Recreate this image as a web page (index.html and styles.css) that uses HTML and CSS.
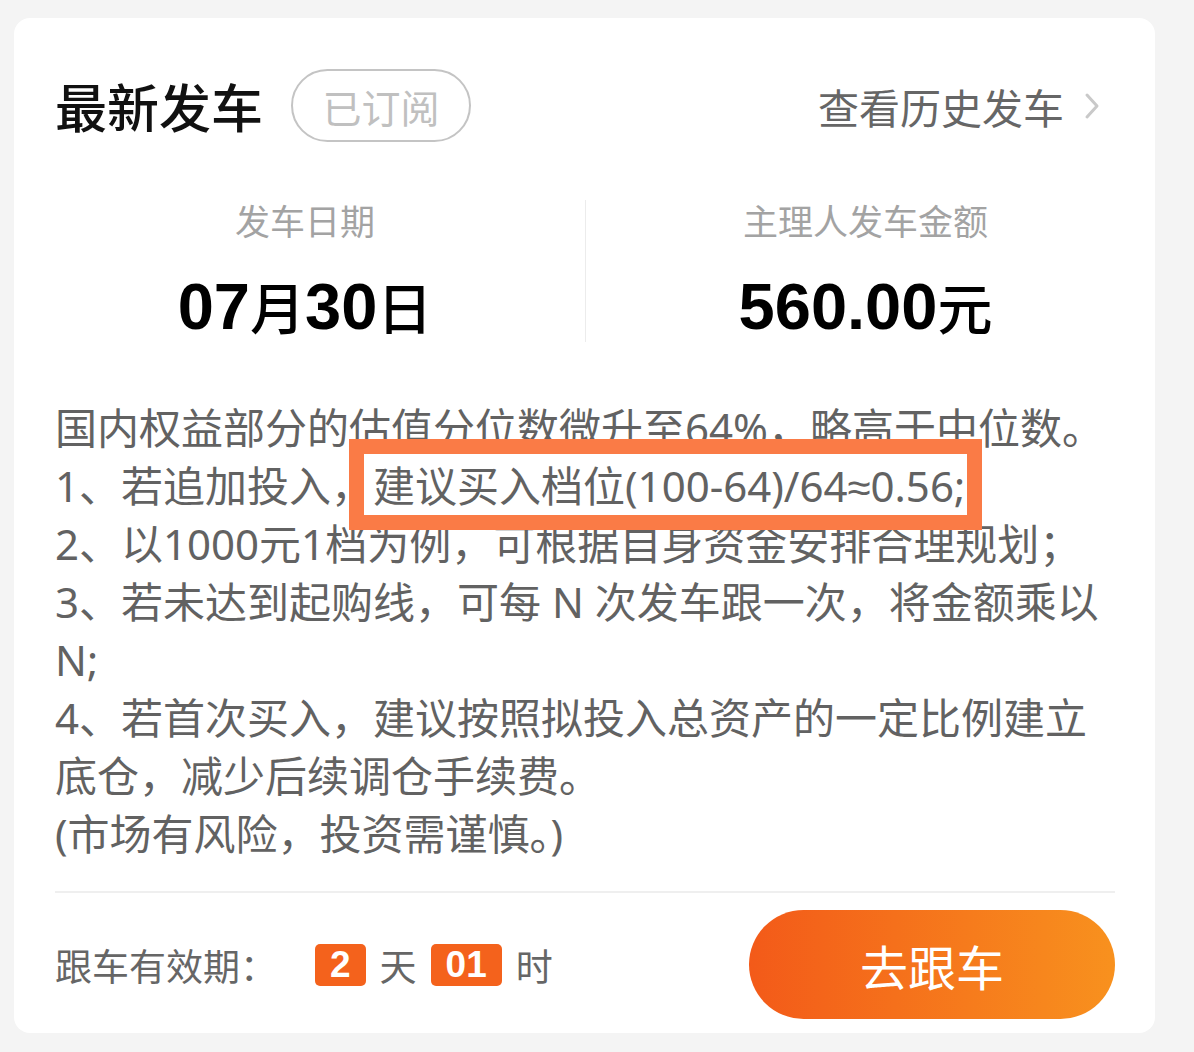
FILE: index.html
```html
<!DOCTYPE html>
<html lang="zh-CN">
<head>
    <meta charset="UTF-8">
    <meta name="viewport" content="width=device-width, initial-scale=1.0">
    <title>最新发车</title>
    <link rel="stylesheet" href="styles.css">
</head>
<body>
    <div class="card">
        <div class="card-header">
            <div class="header-left">
                <h1 class="title">最新发车</h1>
                <span class="sub-pill">已订阅</span>
            </div>
            <a class="history-link" href="#">
                查看历史发车
                <svg class="chevron" width="16" height="28" viewBox="0 0 16 28">
                    <path d="M3 3 L13 14 L3 25" fill="none" stroke="#c9c9c9" stroke-width="3" stroke-linecap="round" stroke-linejoin="round"/>
                </svg>
            </a>
        </div>

        <div class="stats">
            <div class="stat">
                <div class="stat-label">发车日期</div>
                <div class="stat-value">07<span class="unit">月</span>30<span class="unit">日</span></div>
            </div>
            <div class="stat stat-right">
                <div class="stat-label">主理人发车金额</div>
                <div class="stat-value">560.00<span class="unit">元</span></div>
            </div>
        </div>

        <div class="note">
            <p>国内权益部分的估值分位数微升至64%，略高于中位数。</p>
            <p>1、若追加投入，建议买入档位(100-64)/64≈0.56;</p>
            <p>2、以1000元1档为例，可根据自身资金安排合理规划；</p>
            <p>3、若未达到起购线，可每 N 次发车跟一次，将金额乘以 N;</p>
            <p>4、若首次买入，建议按照拟投入总资产的一定比例建立底仓，减少后续调仓手续费。</p>
            <p>(市场有风险，投资需谨慎。)</p>
            <div class="highlight-box"></div>
        </div>

        <div class="card-footer">
            <div class="expire">
                <span class="expire-label">跟车有效期：</span>
                <span class="count">2</span>
                <span class="count-unit">天</span>
                <span class="count">01</span>
                <span class="count-unit">时</span>
            </div>
            <button class="follow-btn">去跟车</button>
        </div>
    </div>
</body>
</html>
```

FILE: styles.css
```css
body {
    margin: 0;
    background-color: #f4f4f4;
    font-family: "Noto Sans CJK SC", "Noto Sans", sans-serif;
}
.card {
    width: 1141px;
    height: 1015px;
    margin: 18px 0 0 14px;
    padding: 51px 40px 0 41px;
    box-sizing: border-box;
    background-color: white;
    border-radius: 16px;
}
.card-header {
    display: flex;
    justify-content: space-between;
    align-items: center;
    height: 73px;
}
.header-left {
    display: flex;
    align-items: center;
    gap: 28px;
}
.title {
    margin: 0;
    font-size: 52px;
    font-weight: 500;
    color: #111;
    line-height: 73px;
}
.sub-pill {
    display: flex;
    align-items: center;
    justify-content: center;
    width: 180px;
    height: 73px;
    box-sizing: border-box;
    border: 2px solid #c4c4c4;
    border-radius: 37px;
    font-size: 39px;
    color: #c0c0c0;
}
.history-link {
    display: flex;
    align-items: center;
    gap: 20px;
    padding-right: 15px;
    font-size: 41px;
    color: #666;
    text-decoration: none;
}

.stats {
    display: grid;
    grid-template-columns: 1fr 1fr;
    margin: 58px -30px 0;
}
.stat {
    display: flex;
    flex-direction: column;
    align-items: center;
    gap: 30px;
}
.stat-right {
    border-left: 1px solid #ececec;
}
.stat-label {
    font-size: 35px;
    line-height: 40px;
    color: #a3a3a3;
}
.stat-value {
    font-family: "Liberation Sans Narrow", "Liberation Sans", sans-serif;
    font-size: 65px;
    font-weight: 700;
    line-height: 70px;
    color: #000;
}
.stat-value .unit {
    font-family: "Noto Sans CJK SC", sans-serif;
    font-size: 55px;
    font-weight: 500;
}

.note {
    position: relative;
    margin-top: 57px;
    font-family: "Noto Sans", "Liberation Sans", "Noto Sans CJK SC", sans-serif;
    font-size: 42px;
    line-height: 58px;
    color: #626262;
}
.note p {
    margin: 0;
}
.highlight-box {
    position: absolute;
    left: 294px;
    top: 40px;
    width: 633px;
    height: 91px;
    box-sizing: border-box;
    border: 15px solid #fa7b46;
}

.card-footer {
    display: flex;
    justify-content: space-between;
    align-items: center;
    margin-top: 28px;
    padding-top: 17px;
    border-top: 2px solid #efefef;
}
.expire {
    display: flex;
    align-items: center;
    font-size: 37px;
    color: #666;
}
.count {
    display: inline-flex;
    align-items: center;
    justify-content: center;
    min-width: 50px;
    height: 42px;
    padding: 0 15px;
    box-sizing: border-box;
    margin-left: 14px;
    border-radius: 5px;
    background-color: #f4621c;
    color: white;
    font-family: "Liberation Sans Narrow", "Liberation Sans", sans-serif;
    font-size: 37px;
    font-weight: 700;
}
.expire-label + .count {
    margin-left: 38px;
}
.count-unit {
    margin-left: 14px;
}
.follow-btn {
    width: 366px;
    height: 109px;
    border: none;
    border-radius: 55px;
    background: linear-gradient(to right, #f35a19, #f8911e);
    color: white;
    font-family: "Noto Sans CJK SC", sans-serif;
    font-size: 48px;
    cursor: pointer;
}
```
